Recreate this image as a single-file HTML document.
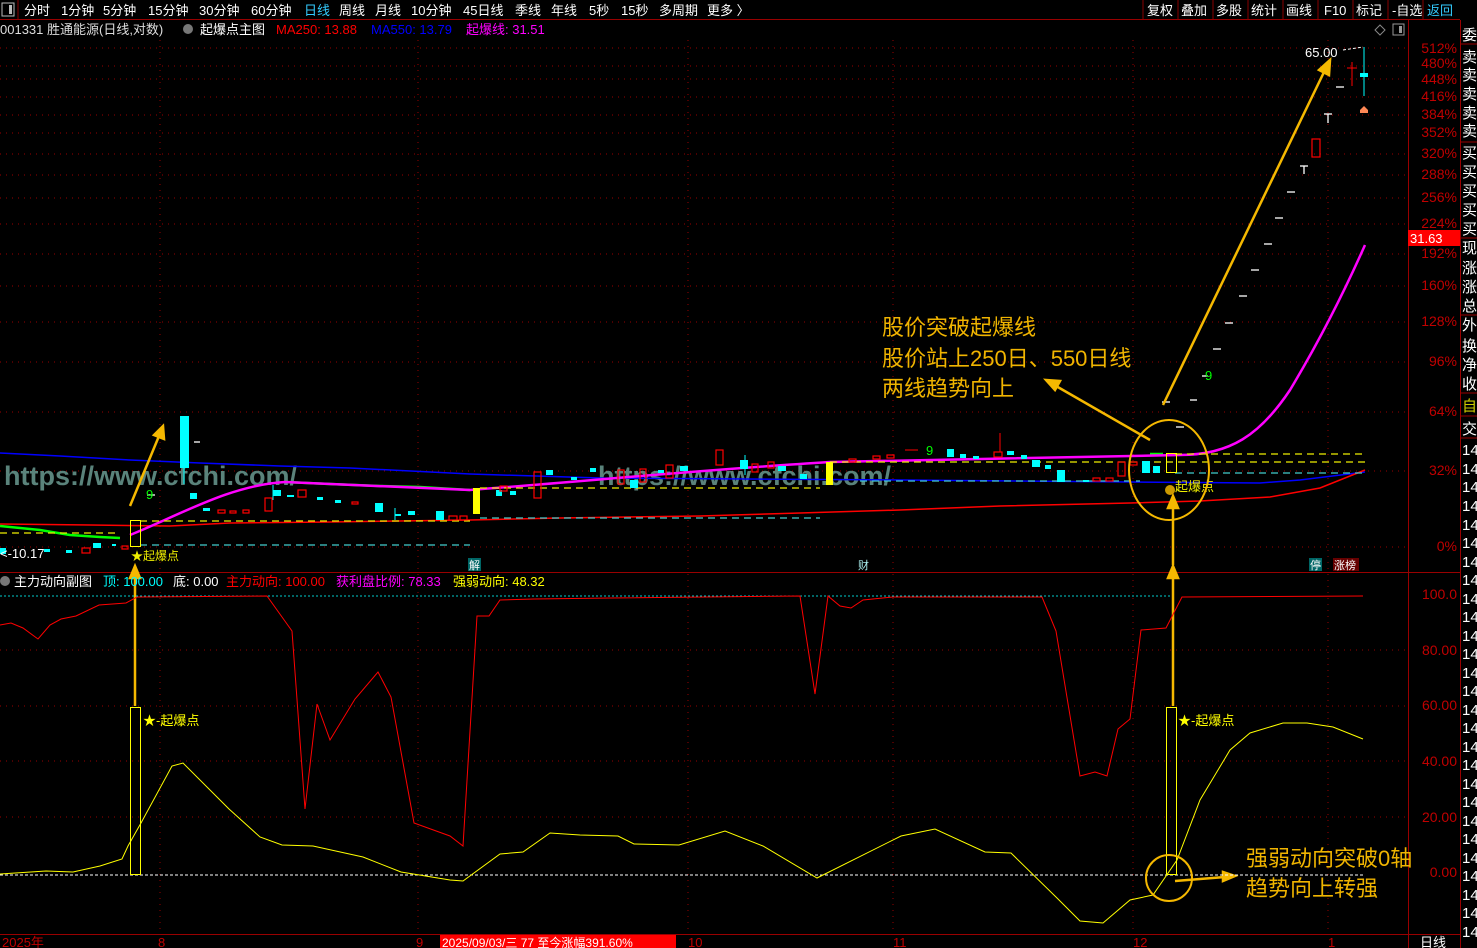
<!DOCTYPE html>
<html><head><meta charset="utf-8">
<style>
html,body{margin:0;padding:0;background:#000;width:1477px;height:948px;overflow:hidden}
svg{display:block}
text{font-family:"Liberation Sans","Noto Sans CJK SC",sans-serif}
</style></head><body>
<svg width="1477" height="948" viewBox="0 0 1477 948" xmlns="http://www.w3.org/2000/svg">
<rect width="1477" height="948" fill="#000"/>
<!-- top bar -->
<rect x="2" y="3" width="12" height="13" fill="none" stroke="#bbb" stroke-width="1"/>
<rect x="9" y="5" width="3" height="9" fill="#bbb"/>
<line x1="18" y1="0" x2="18" y2="19" stroke="#800" />
<g font-size="13" fill="#fff">
<text x="24" y="15">分时</text><text x="61" y="15">1分钟</text><text x="103" y="15">5分钟</text><text x="148" y="15">15分钟</text><text x="199" y="15">30分钟</text><text x="251" y="15">60分钟</text><text x="304" y="15" fill="#3cf">日线</text><text x="339" y="15">周线</text><text x="375" y="15">月线</text><text x="411" y="15">10分钟</text><text x="463" y="15">45日线</text><text x="515" y="15">季线</text><text x="551" y="15">年线</text><text x="589" y="15">5秒</text><text x="621" y="15">15秒</text><text x="659" y="15">多周期</text><text x="707" y="15">更多 〉</text>
<text x="1147" y="15">复权</text><text x="1181" y="15">叠加</text><text x="1216" y="15">多股</text><text x="1251" y="15">统计</text><text x="1286" y="15">画线</text><text x="1324" y="15">F10</text><text x="1356" y="15">标记</text><text x="1392" y="15">-自选</text><text x="1427" y="15" fill="#3cf">返回</text>
</g>
<g stroke="#800"><line x1="1143" y1="0" x2="1143" y2="19"/><line x1="1178" y1="0" x2="1178" y2="19"/><line x1="1213" y1="0" x2="1213" y2="19"/><line x1="1248" y1="0" x2="1248" y2="19"/><line x1="1283" y1="0" x2="1283" y2="19"/><line x1="1318" y1="0" x2="1318" y2="19"/><line x1="1353" y1="0" x2="1353" y2="19"/><line x1="1388" y1="0" x2="1388" y2="19"/><line x1="1423" y1="0" x2="1423" y2="19"/></g>
<line x1="0" y1="19.5" x2="1460" y2="19.5" stroke="#900"/>
<!-- info line -->
<g font-size="13">
<text x="0" y="34" fill="#ddd">001331 胜通能源(日线,对数)</text>
<circle cx="188" cy="29" r="5" fill="#777"/>
<text x="200" y="34" fill="#fff">起爆点主图</text>
<text x="276" y="34" fill="#f00">MA250: 13.88</text>
<text x="371" y="34" fill="#00f">MA550: 13.79</text>
<text x="466" y="34" fill="#f0f">起爆线: 31.51</text>
</g>
<path d="M1380 25 l5 5 l-5 5 l-5 -5z" fill="none" stroke="#888"/>
<rect x="1393" y="24" width="11" height="11" fill="none" stroke="#999"/><rect x="1399" y="26" width="3" height="7" fill="#999"/>
<!-- axis lines -->
<line x1="1408.5" y1="20" x2="1408.5" y2="948" stroke="#900"/>
<line x1="1460.5" y1="20" x2="1460.5" y2="948" stroke="#900"/>
<line x1="0" y1="572.5" x2="1460" y2="572.5" stroke="#900"/>
<line x1="0" y1="934.5" x2="1460" y2="934.5" stroke="#900"/>
<!-- grid -->
<g stroke="#900" stroke-dasharray="1 5" stroke-width="1">
<line x1="0" y1="48" x2="1408" y2="48"/><line x1="0" y1="66" x2="1408" y2="66"/><line x1="0" y1="79" x2="1408" y2="79"/><line x1="0" y1="97" x2="1408" y2="97"/><line x1="0" y1="115" x2="1408" y2="115"/><line x1="0" y1="133" x2="1408" y2="133"/><line x1="0" y1="154" x2="1408" y2="154"/><line x1="0" y1="175" x2="1408" y2="175"/><line x1="0" y1="198" x2="1408" y2="198"/><line x1="0" y1="224" x2="1408" y2="224"/><line x1="0" y1="254" x2="1408" y2="254"/><line x1="0" y1="286" x2="1408" y2="286"/><line x1="0" y1="322" x2="1408" y2="322"/><line x1="0" y1="362" x2="1408" y2="362"/><line x1="0" y1="412" x2="1408" y2="412"/><line x1="0" y1="471" x2="1408" y2="471"/><line x1="0" y1="547" x2="1408" y2="547"/>
<line x1="0" y1="650" x2="1408" y2="650"/><line x1="0" y1="706" x2="1408" y2="706"/><line x1="0" y1="761" x2="1408" y2="761"/><line x1="0" y1="817" x2="1408" y2="817"/>
<line x1="160" y1="40" x2="160" y2="934"/><line x1="418" y1="40" x2="418" y2="934"/><line x1="688" y1="40" x2="688" y2="934"/><line x1="893" y1="40" x2="893" y2="934"/><line x1="1133" y1="40" x2="1133" y2="934"/><line x1="1328" y1="40" x2="1328" y2="934"/>
</g>
<!-- axis labels main -->
<g font-size="14" fill="#c00000" text-anchor="end">
<text x="1457" y="53">512%</text><text x="1457" y="68">480%</text><text x="1457" y="84">448%</text><text x="1457" y="101">416%</text><text x="1457" y="119">384%</text><text x="1457" y="137">352%</text><text x="1457" y="158">320%</text><text x="1457" y="179">288%</text><text x="1457" y="202">256%</text><text x="1457" y="228">224%</text><text x="1457" y="258">192%</text><text x="1457" y="290">160%</text><text x="1457" y="326">128%</text><text x="1457" y="366">96%</text><text x="1457" y="416">64%</text><text x="1457" y="475">32%</text><text x="1457" y="551">0%</text>
<text x="1457" y="599">100.0</text><text x="1457" y="655">80.00</text><text x="1457" y="710">60.00</text><text x="1457" y="766">40.00</text><text x="1457" y="822">20.00</text><text x="1457" y="877">0.00</text>
</g>
<rect x="1408" y="230" width="52" height="16" fill="#f00"/>
<text x="1410" y="243" font-size="13" fill="#fff">31.63</text>
<!-- sidebar -->
<g font-size="15" fill="#fff">
<text x="1462" y="40">委</text><text x="1462" y="62">卖</text><text x="1462" y="80">卖</text><text x="1462" y="99">卖</text><text x="1462" y="118">卖</text><text x="1462" y="136">卖</text><text x="1462" y="158">买</text><text x="1462" y="177">买</text><text x="1462" y="196">买</text><text x="1462" y="215">买</text><text x="1462" y="234">买</text><text x="1462" y="253">现</text><text x="1462" y="273">涨</text><text x="1462" y="292">涨</text><text x="1462" y="311">总</text><text x="1462" y="330">外</text><text x="1462" y="351">换</text><text x="1462" y="370">净</text><text x="1462" y="389">收</text><text x="1462" y="411" fill="#cc0">自</text><text x="1462" y="434">交</text>
<text x="1462" y="455">14</text><text x="1462" y="474">14</text><text x="1462" y="492">14</text><text x="1462" y="511">14</text><text x="1462" y="530">14</text><text x="1462" y="548">14</text><text x="1462" y="567">14</text><text x="1462" y="585">14</text><text x="1462" y="604">14</text><text x="1462" y="622">14</text><text x="1462" y="641">14</text><text x="1462" y="659">14</text><text x="1462" y="678">14</text><text x="1462" y="696">14</text><text x="1462" y="715">14</text><text x="1462" y="733">14</text><text x="1462" y="752">14</text><text x="1462" y="770">14</text><text x="1462" y="789">14</text><text x="1462" y="807">14</text><text x="1462" y="826">14</text><text x="1462" y="844">14</text><text x="1462" y="863">14</text><text x="1462" y="881">14</text><text x="1462" y="900">14</text><text x="1462" y="918">14</text><text x="1462" y="937">14</text>
</g>
<g stroke="#900"><line x1="1460" y1="44" x2="1477" y2="44"/><line x1="1460" y1="142" x2="1477" y2="142"/><line x1="1460" y1="238" x2="1477" y2="238"/><line x1="1460" y1="315" x2="1477" y2="315"/><line x1="1460" y1="393" x2="1477" y2="393"/><line x1="1460" y1="416" x2="1477" y2="416"/><line x1="1460" y1="438" x2="1477" y2="438"/></g>

<!-- watermarks -->
<g font-size="27" font-weight="bold" fill="#6a9a90" fill-opacity="0.85">
<text x="4" y="485">https://www.cfchi.com/</text>
<text x="598" y="485">https://www.cfchi.com/</text>
</g>

<!-- MA lines -->
<polyline fill="none" stroke="#00f" stroke-width="1.5" points="0,453 60,456 130,460 200,463 280,466 350,468 470,474 600,478 900,480 1130,482 1260,483 1300,480 1365,472"/>
<polyline fill="none" stroke="#f00" stroke-width="1.5" points="0,524 90,525 170,526 230,523 330,522 470,520 560,518 700,516 800,513 900,510 1000,506 1130,503 1200,501 1270,497 1320,488 1365,470"/>
<polyline fill="none" stroke="#0f0" stroke-width="2.5" points="0,526 40,530 70,535 100,537 120,538"/>
<polyline fill="none" stroke="#0f0" stroke-width="2.5" points="285,482 330,484 380,486 420,487 470,490"/>
<line x1="1150" y1="454" x2="1163" y2="454" stroke="#0f0" stroke-width="2.5"/>
<path d="M130,535 C180,515 230,485 285,482 L470,490 C600,480 700,470 830,462 L1180,455 C1230,455 1260,435 1290,390 C1320,340 1345,290 1365,245" fill="none" stroke="#f0f" stroke-width="2.5"/>
<!-- dashed support lines -->
<g stroke-dasharray="7 5" stroke-width="1.2" fill="none">
<line x1="0" y1="533" x2="120" y2="533" stroke="#ee0"/>
<line x1="140" y1="521" x2="470" y2="521" stroke="#ee0"/>
<line x1="140" y1="545" x2="470" y2="545" stroke="#4cc"/>
<line x1="480" y1="518" x2="820" y2="518" stroke="#4cc"/>
<line x1="480" y1="488" x2="820" y2="488" stroke="#ee0"/>
<line x1="830" y1="462" x2="1365" y2="462" stroke="#ee0"/>
<line x1="860" y1="481" x2="1140" y2="481" stroke="#4cc"/>
<line x1="1175" y1="454" x2="1365" y2="454" stroke="#ee0"/>
<line x1="1175" y1="473" x2="1365" y2="473" stroke="#4cc"/>
</g>

<!-- candles -->
<g fill="#0ff">
<rect x="0" y="548" width="6" height="6"/><rect x="44" y="549" width="6" height="3"/><rect x="66" y="550" width="6" height="3"/>
<rect x="93" y="543" width="8" height="5"/><rect x="112" y="544" width="4" height="2"/><rect x="180" y="416" width="9" height="52"/><rect x="190" y="493" width="7" height="6"/><rect x="203" y="508" width="7" height="3"/>
<rect x="273" y="490" width="8" height="6"/><rect x="287" y="495" width="7" height="2"/><rect x="317" y="497" width="6" height="3"/><rect x="335" y="500" width="6" height="3"/><rect x="375" y="503" width="8" height="9"/><rect x="395" y="514" width="6" height="2"/><rect x="408" y="511" width="7" height="4"/><rect x="436" y="511" width="8" height="9"/>
<rect x="496" y="490" width="6" height="6"/><rect x="510" y="491" width="6" height="4"/><rect x="546" y="470" width="7" height="5"/><rect x="571" y="477" width="6" height="3"/><rect x="590" y="468" width="6" height="4"/><rect x="630" y="480" width="8" height="8"/><rect x="658" y="470" width="6" height="3"/><rect x="680" y="466" width="8" height="5"/><rect x="740" y="460" width="8" height="9"/><rect x="778" y="466" width="8" height="5"/><rect x="800" y="474" width="7" height="5"/>
<rect x="947" y="449" width="7" height="8"/><rect x="960" y="454" width="6" height="4"/><rect x="973" y="456" width="6" height="3"/><rect x="1007" y="451" width="7" height="4"/><rect x="1021" y="455" width="6" height="4"/><rect x="1032" y="460" width="8" height="7"/><rect x="1045" y="465" width="6" height="4"/><rect x="1057" y="470" width="8" height="12"/><rect x="1083" y="480" width="6" height="2"/><rect x="1142" y="461" width="8" height="12"/><rect x="1153" y="466" width="7" height="7"/><rect x="1360" y="73" width="8" height="4"/>
</g>
<g fill="none" stroke="#f00" stroke-width="1.2">
<rect x="82" y="548" width="8" height="5"/><rect x="122" y="546" width="6" height="3"/><rect x="218" y="510" width="7" height="3"/><rect x="230" y="511" width="6" height="2"/><rect x="243" y="510" width="6" height="3"/><rect x="265" y="498" width="7" height="13"/>
<rect x="298" y="490" width="8" height="7"/><rect x="352" y="502" width="6" height="2"/><rect x="449" y="516" width="8" height="4"/><rect x="460" y="516" width="7" height="4"/><rect x="500" y="486" width="7" height="5"/><rect x="534" y="472" width="7" height="26"/>
<rect x="618" y="470" width="6" height="14"/><rect x="640" y="469" width="6" height="13"/><rect x="666" y="465" width="7" height="13"/><rect x="716" y="450" width="7" height="15"/><rect x="752" y="464" width="6" height="8"/><rect x="768" y="462" width="6" height="6"/>
<rect x="849" y="459" width="7" height="3"/><rect x="873" y="456" width="7" height="3"/><rect x="887" y="455" width="7" height="3"/><rect x="994" y="452" width="8" height="5"/><rect x="1093" y="478" width="7" height="3"/><rect x="1106" y="478" width="7" height="3"/><rect x="1118" y="462" width="7" height="14"/><rect x="1130" y="462" width="7" height="3"/><rect x="1312" y="139" width="8" height="18"/>
</g>
<g stroke="#0ff" stroke-width="1"><line x1="184" y1="468" x2="184" y2="484"/><line x1="273" y1="485" x2="273" y2="500"/><line x1="395" y1="508" x2="395" y2="520"/><line x1="745" y1="455" x2="745" y2="475"/><line x1="1364" y1="47" x2="1364" y2="96"/></g>
<g stroke="#f00" stroke-width="1"><line x1="1000" y1="433" x2="1000" y2="452"/><line x1="1352" y1="62" x2="1352" y2="86"/><line x1="1347" y1="68" x2="1357" y2="68"/><line x1="905" y1="450" x2="918" y2="450"/></g>
<rect x="473" y="488" width="7" height="26" fill="#ff0"/>
<rect x="826" y="462" width="7" height="23" fill="#ff0"/>
<rect x="130.5" y="520.5" width="10" height="26" fill="none" stroke="#ff0"/>
<rect x="1166.5" y="453.5" width="10" height="19" fill="none" stroke="#ff0"/>
<g stroke="#fff" stroke-width="1.3">
<line x1="1162" y1="402" x2="1170" y2="402"/><line x1="1176" y1="427" x2="1184" y2="427"/><line x1="1190" y1="400" x2="1197" y2="400"/><line x1="1202" y1="376" x2="1208" y2="376"/><line x1="1213" y1="349" x2="1221" y2="349"/><line x1="1225" y1="323" x2="1233" y2="323"/><line x1="1239" y1="296" x2="1247" y2="296"/><line x1="1251" y1="270" x2="1259" y2="270"/><line x1="1264" y1="244" x2="1272" y2="244"/><line x1="1275" y1="218" x2="1283" y2="218"/><line x1="1287" y1="192" x2="1295" y2="192"/><line x1="1300" y1="166" x2="1308" y2="166"/><line x1="1304" y1="166" x2="1304" y2="174"/><line x1="1324" y1="114" x2="1332" y2="114"/><line x1="1328" y1="114" x2="1328" y2="123"/><line x1="1336" y1="87" x2="1344" y2="87"/>
<line x1="194" y1="442" x2="200" y2="442"/><line x1="147" y1="495" x2="155" y2="495"/>
</g>
<path d="M1364 106 l4 4 v3 h-8 v-3z" fill="#f85"/>
<text x="1305" y="57" font-size="13" fill="#fff">65.00</text>
<path d="M1343 50 l20 -3" stroke="#fff" stroke-dasharray="3 2" fill="none"/>
<g fill="#0f0" font-size="13"><text x="146" y="499">9</text><text x="926" y="455">9</text><text x="1205" y="380">9</text></g>
<text x="0" y="558" font-size="13" fill="#fff">&lt;-10.17</text>
<text x="131" y="560" font-size="12" fill="#ee0">★起爆点</text>
<circle cx="1170" cy="490" r="5" fill="#c90"/>
<text x="1175" y="491" font-size="13" fill="#ee0">起爆点</text>
<rect x="468" y="558" width="13" height="13" fill="#066"/><text x="469" y="569" font-size="11" fill="#fff">解</text>
<text x="858" y="569" font-size="11" fill="#aee">财</text>
<rect x="1309" y="558" width="13" height="13" fill="#066"/><text x="1310" y="569" font-size="11" fill="#fff">停</text>
<rect x="1333" y="558" width="26" height="13" fill="#600"/><text x="1334" y="569" font-size="11" fill="#fff">涨榜</text>

<g font-size="22" fill="#f0b400">
<text x="882" y="335">股价突破起爆线</text>
<text x="882" y="366">股价站上250日、550日线</text>
<text x="882" y="396">两线趋势向上</text>
</g>
<ellipse cx="1169" cy="470" rx="40" ry="50" fill="none" stroke="#f5b800" stroke-width="2"/>
<g stroke="#f5b800" stroke-width="2.5" fill="#f5b800">
<line x1="1163" y1="405" x2="1325" y2="70"/><path d="M1330 60 l-1 15 l-10 -5z"/>
<line x1="1150" y1="440" x2="1056" y2="386"/><path d="M1046 380 l14 1 l-5 9z"/>
<line x1="1173" y1="565" x2="1173" y2="505"/><path d="M1173 496 l5 12 h-10z"/>
<line x1="130" y1="506" x2="159" y2="436"/><path d="M163 426 l1 13 l-10 -4z"/>
<line x1="135" y1="706" x2="135" y2="575"/><path d="M135 566 l5 12 h-10z"/>
<line x1="1173" y1="706" x2="1173" y2="575"/><path d="M1173 566 l5 12 h-10z"/>
<line x1="1175" y1="881" x2="1225" y2="877"/><path d="M1235 876 l-12 5 v-9z"/>
</g>

<circle cx="5" cy="581" r="5" fill="#777"/>
<g font-size="13">
<text x="14" y="586" fill="#fff">主力动向副图</text>
<text x="103" y="586" fill="#0ff">顶: 100.00</text>
<text x="173" y="586" fill="#fff">底: 0.00</text>
<text x="226" y="586" fill="#f00">主力动向: 100.00</text>
<text x="336" y="586" fill="#f0f">获利盘比例: 78.33</text>
<text x="453" y="586" fill="#ff0">强弱动向: 48.32</text>
</g>
<line x1="0" y1="596" x2="1170" y2="596" stroke="#0cc" stroke-dasharray="2 2"/>
<line x1="0" y1="875" x2="1365" y2="875" stroke="#fff" stroke-dasharray="3 2"/>
<polyline fill="none" stroke="#f00" stroke-width="1" points="0,625 11,623 23,628 38,639 50,625 61,619 76,616 99,605 126,603 137,597 267,596 292,631 305,809 317,704 330,740 355,699 378,672 391,697 414,823 450,836 463,846 477,616 489,616 500,600 534,599 611,598 800,596 815,694 828,596 840,606 851,608 863,600 893,597 1042,597 1056,631 1080,776 1095,772 1107,776 1118,729 1130,719 1141,630 1166,628 1182,597 1363,596"/>
<polyline fill="none" stroke="#ff0" stroke-width="1" points="0,874 46,871 73,872 100,866 122,859 128,846 141,823 172,766 183,763 229,809 260,837 282,845 313,846 363,857 401,872 450,880 463,881 500,854 523,852 550,833 580,835 618,836 634,844 679,845 725,831 763,846 817,878 901,836 935,829 985,852 1011,853 1057,898 1080,921 1103,923 1130,900 1153,895 1177,860 1200,800 1230,750 1250,733 1283,723 1307,723 1333,727 1363,739"/>
<rect x="130.5" y="707.5" width="10" height="167" fill="none" stroke="#ff0"/>
<rect x="1166.5" y="707.5" width="10" height="167" fill="none" stroke="#ff0"/>
<text x="143" y="725" font-size="13" fill="#ff0">★-起爆点</text>
<text x="1178" y="725" font-size="13" fill="#ff0">★-起爆点</text>
<circle cx="1169" cy="878" r="23" fill="none" stroke="#f5b800" stroke-width="2"/>
<g font-size="22" fill="#f0b400"><text x="1246" y="866">强弱动向突破0轴</text><text x="1246" y="896">趋势向上转强</text></g>

<g font-size="13" fill="#c00000"><text x="2" y="947">2025年</text><text x="158" y="947">8</text><text x="416" y="947">9</text><text x="688" y="947">10</text><text x="893" y="947">11</text><text x="1133" y="947">12</text><text x="1328" y="947">1</text></g>
<rect x="440" y="935" width="236" height="13" fill="#f00"/>
<text x="442" y="947" font-size="12" fill="#fff">2025/09/03/三 77 至今涨幅391.60%</text>
<text x="1420" y="947" font-size="13" fill="#fff">日线</text>
</svg>
</body></html>
